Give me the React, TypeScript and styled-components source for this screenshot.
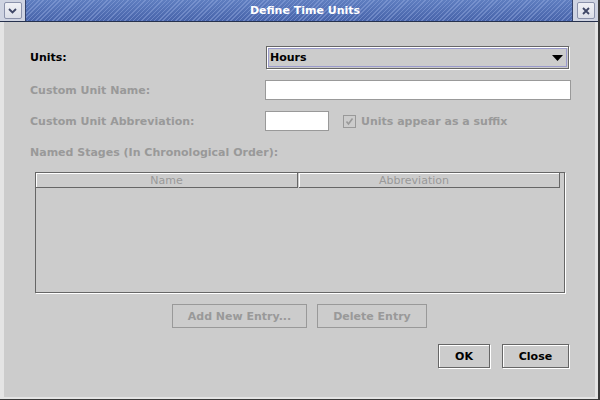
import React from 'react';
import styled, { createGlobalStyle } from 'styled-components';

const Global = createGlobalStyle`
  html, body { margin: 0; padding: 0; background: #cccccc; }
  body { font-family: "DejaVu Sans", "Liberation Sans", sans-serif; }
  * { box-sizing: border-box; }
`;

const Window = styled.div`
  width: 600px;
  height: 400px;
  display: flex;
  flex-direction: column;
  background: #cccccc;
  border-right: 2px solid #3a3a3a;
  border-bottom: 1px solid #3a3a3a;
  overflow: hidden;
`;

const TitleBar = styled.div`
  height: 22px;
  flex-shrink: 0;
  display: flex;
  border-bottom: 1px solid #26314d;
  background: #cfd4e2;
`;

const TitleSide = styled.div`
  width: 25px;
  display: flex;
  align-items: center;
  justify-content: center;
  background: #cfd4e2;
`;

const TitleStripes = styled.div`
  flex: 1;
  display: flex;
  align-items: center;
  justify-content: center;
  border-left: 1px solid #34426a;
  border-right: 1px solid #34426a;
  background:
    repeating-linear-gradient(135deg, rgba(150, 172, 225, 0.45) 0 1px, transparent 1px 3px),
    linear-gradient(#5f7ec0, #4864aa);
`;

const TitleText = styled.span`
  color: #ffffff;
  font-weight: bold;
  font-size: 11px;
  padding-left: 12px;
  padding-bottom: 1px;
`;

const FrameButton = styled.div`
  width: 18px;
  height: 17px;
  border: 1px solid #8b92ab;
  border-radius: 2px;
  background: linear-gradient(#f0f1f6, #dcdfe8);
  display: flex;
  align-items: center;
  justify-content: center;
`;

const Body = styled.div`
  flex: 1;
  display: flex;
  flex-direction: column;
  border-left: 4px solid #e4e4e4;
  border-right: 3px solid #e4e4e4;
  border-bottom: 2px solid #e4e4e4;
  padding: 0 24px 0 26px;
  font-size: 11px;
  font-weight: bold;
`;

const FormGrid = styled.div`
  display: grid;
  grid-template-columns: 235px 1fr;
  margin-top: 24px;
`;

const Label = styled.div<{ $disabled?: boolean }>`
  color: ${(p) => (p.$disabled ? '#999999' : '#000000')};
  display: flex;
  align-items: center;
  white-space: nowrap;
`;

const Cell = styled.div<{ $top?: number }>`
  margin-top: ${(p) => p.$top ?? 0}px;
  display: flex;
  align-items: center;
`;

const LabelCell = styled(Label)<{ $top?: number }>`
  margin-top: ${(p) => p.$top ?? 0}px;
`;

const Combo = styled.div`
  margin-left: 1px;
  margin-right: 2px;
  flex: 1;
  height: 23px;
  border: 1px solid #666666;
  box-shadow: 1px 1px 0 #ffffff, inset 1px 1px 0 #ffffff;
  padding: 1px;
  display: flex;
`;

const ComboFocus = styled.div`
  flex: 1;
  border: 1px solid #9a9acb;
  display: flex;
  align-items: center;
  padding: 0 3px 0 1px;
  color: #000;
  font-size: 11px;
  font-weight: bold;
`;

const ComboText = styled.span`
  flex: 1;
`;

const TextField = styled.div<{ $width?: number }>`
  height: 20px;
  width: ${(p) => (p.$width ? `${p.$width}px` : '100%')};
  background: #ffffff;
  border: 1px solid #999999;
`;

const CheckRow = styled.div`
  display: flex;
  align-items: center;
  margin-left: 14px;
  gap: 5px;
  color: #999999;
`;

const CheckBox = styled.div`
  width: 13px;
  height: 13px;
  border: 1px solid #999999;
  display: flex;
  align-items: center;
  justify-content: center;
`;

const StagesLabel = styled(Label)`
  margin-top: 14px;
  height: 14px;
`;

const Table = styled.div`
  margin: 13px 6px 0 5px;
  height: 121px;
  flex-shrink: 0;
  border: 1px solid #666666;
  box-shadow: 1px 1px 0 #ffffff;
  display: flex;
  flex-direction: column;
`;

const TableHeader = styled.div`
  display: grid;
  grid-template-columns: 263px 262px;
  height: 15px;
`;

const HeaderCell = styled.div<{ $padRight?: number }>`
  border-right: 1px solid #666666;
  border-bottom: 1px solid #666666;
  box-shadow: inset 1px 1px 0 #ffffff;
  color: #999999;
  font-weight: normal;
  font-size: 11px;
  display: flex;
  align-items: center;
  justify-content: center;
  margin-right: 1px;
  padding-right: ${(p) => p.$padRight ?? 0}px;
`;

const ButtonRow = styled.div<{ $align: 'center' | 'flex-end'; $top: number; $gap: number; $right: number }>`
  display: flex;
  justify-content: ${(p) => p.$align};
  gap: ${(p) => p.$gap}px;
  margin-top: ${(p) => p.$top}px;
  margin-right: ${(p) => p.$right}px;
`;

const Button = styled.div<{ $width: number; $disabled?: boolean }>`
  width: ${(p) => p.$width}px;
  height: 24px;
  display: flex;
  align-items: center;
  justify-content: center;
  font-size: 11px;
  font-weight: bold;
  color: ${(p) => (p.$disabled ? '#999999' : '#000000')};
  border: 1px solid ${(p) => (p.$disabled ? '#999999' : '#666666')};
  box-shadow: ${(p) => (p.$disabled ? 'none' : 'inset 1px 1px 0 #ffffff, 1px 1px 0 #ffffff')};
`;

export default function App() {
  return (
    <>
      <Global />
      <Window>
        <TitleBar>
          <TitleSide>
            <FrameButton>
              <svg width="9" height="6" viewBox="0 0 9 6">
                <path d="M1 1 L4.5 4.5 L8 1" stroke="#3f4766" strokeWidth="1.8" fill="none" />
              </svg>
            </FrameButton>
          </TitleSide>
          <TitleStripes>
            <TitleText>Define Time Units</TitleText>
          </TitleStripes>
          <TitleSide>
            <FrameButton>
              <svg width="8" height="8" viewBox="0 0 8 8">
                <path d="M1 1 L7 7 M7 1 L1 7" stroke="#3f4766" strokeWidth="1.8" fill="none" />
              </svg>
            </FrameButton>
          </TitleSide>
        </TitleBar>
        <Body>
          <FormGrid>
            <Label>Units:</Label>
            <Cell>
              <Combo>
                <ComboFocus>
                  <ComboText>Hours</ComboText>
                  <svg width="11" height="6" viewBox="0 0 11 6">
                    <path d="M0 0 L11 0 L5.5 6 Z" fill="#000" />
                  </svg>
                </ComboFocus>
              </Combo>
            </Cell>
            <LabelCell $disabled $top={11}>Custom Unit Name:</LabelCell>
            <Cell $top={11}>
              <TextField />
            </Cell>
            <LabelCell $disabled $top={11}>Custom Unit Abbreviation:</LabelCell>
            <Cell $top={11}>
              <TextField $width={64} />
              <CheckRow>
                <CheckBox>
                  <svg width="9" height="9" viewBox="0 0 9 9">
                    <path d="M1.5 4.5 L3.5 7 L7.5 1.5" stroke="#999" strokeWidth="1.6" fill="none" />
                  </svg>
                </CheckBox>
                <span>Units appear as a suffix</span>
              </CheckRow>
            </Cell>
          </FormGrid>
          <StagesLabel $disabled>Named Stages (In Chronological Order):</StagesLabel>
          <Table>
            <TableHeader>
              <HeaderCell>Name</HeaderCell>
              <HeaderCell $padRight={30}>Abbreviation</HeaderCell>
            </TableHeader>
          </Table>
          <ButtonRow $align="center" $top={11} $gap={10} $right={2}>
            <Button $width={135} $disabled>Add New Entry...</Button>
            <Button $width={110} $disabled>Delete Entry</Button>
          </ButtonRow>
          <ButtonRow $align="flex-end" $top={16} $gap={12} $right={2}>
            <Button $width={52}>OK</Button>
            <Button $width={67}>Close</Button>
          </ButtonRow>
        </Body>
      </Window>
    </>
  );
}
